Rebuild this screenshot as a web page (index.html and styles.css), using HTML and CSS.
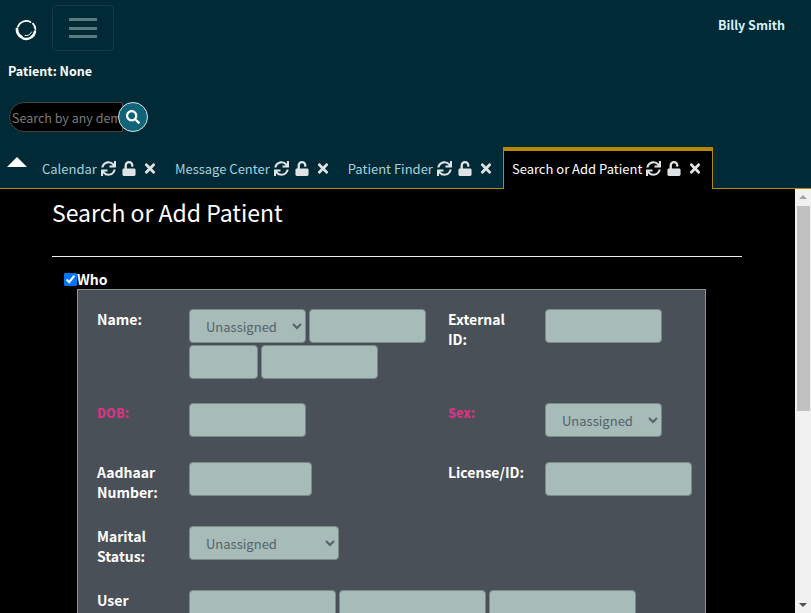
FILE: index.html
```html
<!DOCTYPE html>
<html lang="en">
<head>
  <meta charset="UTF-8" />
  <meta name="viewport" content="width=device-width, initial-scale=1.0"/>
  <title>Search or Add Patient</title>
  <link rel="stylesheet" href="styles.css">
</head>
<body>

<svg class="defs" width="0" height="0">
  <symbol id="i-sync" viewBox="0 0 512 512"><path d="M440.65 12.57l4 82.77A247.16 247.16 0 0 0 255.83 8C134.73 8 33.91 94.92 12.29 209.82A12 12 0 0 0 24.09 224h49.05a12 12 0 0 0 11.67-9.26 175.91 175.91 0 0 1 317-56.94l-101.46-4.86a12 12 0 0 0-12.57 12v47.41a12 12 0 0 0 12 12H500a12 12 0 0 0 12-12V12a12 12 0 0 0-12-12h-47.37a12 12 0 0 0-11.98 12.57zM255.83 432a175.61 175.61 0 0 1-146-77.8l101.8 4.87a12 12 0 0 0 12.57-12v-47.4a12 12 0 0 0-12-12H12a12 12 0 0 0-12 12V500a12 12 0 0 0 12 12h47.35a12 12 0 0 0 12-12.6l-4.15-82.57A247.17 247.17 0 0 0 255.83 504c121.11 0 221.93-86.92 243.55-201.82a12 12 0 0 0-11.8-14.18h-49.05a12 12 0 0 0-11.67 9.26A175.86 175.86 0 0 1 255.83 432z"/></symbol>
  <symbol id="i-unlock" viewBox="0 0 448 512"><path d="M400 256H152V152.9c0-39.6 31.7-72.5 71.3-72.9 40-.4 72.7 32.1 72.7 72v16c0 13.3 10.7 24 24 24h32c13.3 0 24-10.7 24-24v-16C376 68 307.5-.3 223.5 0 139.5.3 72 69.5 72 153.5V256H48c-26.5 0-48 21.5-48 48v160c0 26.5 21.5 48 48 48h352c26.5 0 48-21.5 48-48V304c0-26.5-21.5-48-48-48z"/></symbol>
  <symbol id="i-times" viewBox="0 0 352 512"><path d="M242.72 256l100.07-100.07c12.28-12.28 12.28-32.19 0-44.48l-22.24-22.24c-12.28-12.28-32.19-12.28-44.48 0L176 189.28 75.93 89.21c-12.28-12.28-32.19-12.28-44.48 0L9.21 111.45c-12.28 12.28-12.28 32.19 0 44.48L109.28 256 9.21 356.07c-12.28 12.28-12.28 32.19 0 44.48l22.24 22.24c12.28 12.28 32.2 12.28 44.48 0L176 322.72l100.07 100.07c12.28 12.28 32.2 12.28 44.48 0l22.24-22.24c12.28-12.28 12.28-32.19 0-44.48L242.72 256z"/></symbol>
  <symbol id="i-search" viewBox="0 0 512 512"><path d="M505 442.7L405.3 343c-4.5-4.5-10.6-7-17-7H372c27.6-35.3 44-79.7 44-128C416 93.1 322.9 0 208 0S0 93.1 0 208s93.1 208 208 208c48.3 0 92.7-16.4 128-44v16.3c0 6.4 2.5 12.5 7 17l99.7 99.7c9.4 9.4 24.6 9.4 33.9 0l28.3-28.3c9.4-9.4 9.4-24.6.1-34zM208 336c-70.7 0-128-57.2-128-128 0-70.7 57.2-128 128-128 70.7 0 128 57.2 128 128 0 70.7-57.2 128-128 128z"/></symbol>
</svg>

<header class="topbar">
  <div class="toprow">
    <a class="logo" href="#">
      <svg width="22" height="22" viewBox="0 0 22 22" fill="none" stroke="#fff" stroke-linecap="round">
        <path d="M15.5 3A9 9 0 0 0 3 7.5" stroke-width="1.8"/>
        <path d="M2 10A9 9 0 0 0 6.5 18" stroke-width="2.8"/>
        <path d="M8 19.4A9 9 0 0 0 20 12.5" stroke-width="2.4"/>
        <path d="M10 16.5A6 6 0 0 0 16.5 13" stroke-width="0.9"/>
        <path d="M18 4.6A9 9 0 0 1 20.4 10" stroke-width="1.8"/>
      </svg>
    </a>
    <button class="burger" type="button"><span></span><span></span><span></span></button>
    <span class="username">Billy Smith</span>
  </div>
  <div class="patient">Patient: None</div>
  <form class="search">
    <input class="search-input" type="text" placeholder="Search by any demographics">
    <button class="search-btn" type="button"><svg class="ico"><use href="#i-search"/></svg></button>
  </form>
  <nav class="tabs">
    <span class="collapse"></span>
    <div class="tab">Calendar
      <svg class="ico sync"><use href="#i-sync"/></svg><svg class="ico lock"><use href="#i-unlock"/></svg><svg class="ico close"><use href="#i-times"/></svg>
    </div>
    <div class="tab">Message Center
      <svg class="ico sync"><use href="#i-sync"/></svg><svg class="ico lock"><use href="#i-unlock"/></svg><svg class="ico close"><use href="#i-times"/></svg>
    </div>
    <div class="tab">Patient Finder
      <svg class="ico sync"><use href="#i-sync"/></svg><svg class="ico lock"><use href="#i-unlock"/></svg><svg class="ico close"><use href="#i-times"/></svg>
    </div>
    <div class="tab active">Search or Add Patient
      <svg class="ico sync"><use href="#i-sync"/></svg><svg class="ico lock"><use href="#i-unlock"/></svg><svg class="ico close"><use href="#i-times"/></svg>
    </div>
  </nav>
</header>

<div class="body-wrap">
  <main class="content">
    <h2 class="title">Search or Add Patient</h2>
    <hr class="rule">
    <label class="section"><input type="checkbox" checked>Who</label>
    <div class="panel">
      <div class="row">
        <label class="lbl">Name:</label>
        <div class="fields">
          <select class="w117"><option>Unassigned</option></select>
          <input class="w117" type="text">
          <input class="w69" type="text">
          <input class="w117" type="text">
        </div>
        <label class="lbl second">External ID:</label>
        <div class="fields"><input class="w117" type="text"></div>
      </div>
      <div class="row tall">
        <label class="lbl req">DOB:</label>
        <div class="fields"><input class="w117" type="text"></div>
        <label class="lbl second req">Sex:</label>
        <div class="fields"><select class="w117"><option>Unassigned</option></select></div>
      </div>
      <div class="row">
        <label class="lbl">Aadhaar Number:</label>
        <div class="fields"><input class="w123" type="text"></div>
        <label class="lbl second">License/ID:</label>
        <div class="fields"><input class="w147" type="text"></div>
      </div>
      <div class="row">
        <label class="lbl">Marital Status:</label>
        <div class="fields wide"><select class="w150"><option>Unassigned</option></select></div>
      </div>
      <div class="row">
        <label class="lbl">User</label>
        <div class="fields wide">
          <input class="w147" type="text">
          <input class="w147" type="text">
          <input class="w147" type="text">
        </div>
      </div>
    </div>
  </main>
  <div class="scrollbar">
    <span class="arrow up"></span>
    <span class="thumb"></span>
    <span class="arrow down"></span>
  </div>
</div>

</body>
</html>
```

FILE: styles.css
```css
html, body {
  height: 100%;
}
body {
  margin: 0;
  display: flex;
  flex-direction: column;
  overflow: hidden;
  font-family: "Noto Sans CJK SC", "Noto Sans", sans-serif;
  font-size: 13px;
  background: #000;
  color: #fff;
}
.defs {
  position: absolute;
}
.ico {
  display: block;
  fill: currentColor;
}

/* top bar */
.topbar {
  flex: none;
  height: 189px;
  box-sizing: border-box;
  background: #002b36;
  border-bottom: 1px solid #b58900;
}
.toprow {
  display: flex;
  align-items: center;
  height: 46px;
  padding-top: 5px;
}
.logo {
  display: block;
  width: 22px;
  height: 22px;
  margin: 4px 15px 0 15px;
}
.burger {
  display: flex;
  flex-direction: column;
  justify-content: space-between;
  width: 62px;
  height: 46px;
  box-sizing: border-box;
  padding: 12px 16px;
  background: none;
  border: 1px solid #0f3f4a;
  border-radius: 4px;
}
.burger span {
  display: block;
  height: 3px;
  width: 28px;
  background: #5d7a80;
}
.username {
  margin: 0 26px 7px auto;
  font-size: 12.5px;
  font-weight: 700;
  color: #d6f0f5;
}
.patient {
  margin: 10px 0 0 8px;
  font-size: 12.5px;
  line-height: 19px;
  font-weight: 700;
}
.search {
  display: flex;
  align-items: center;
  margin: 21px 0 0 9px;
  height: 32px;
}
.search-input {
  width: 114px;
  height: 30px;
  box-sizing: border-box;
  padding: 0 0 0 2px;
  background: #000;
  border: 1px solid #444;
  border-radius: 15px 0 0 15px;
  font: inherit;
  font-size: 12.5px;
  color: #fff;
}
.search-input::placeholder {
  color: #7b7b7b;
}
.search-btn {
  display: flex;
  align-items: center;
  justify-content: center;
  width: 30px;
  height: 30px;
  margin-left: -5px;
  padding: 0;
  background: #0f6478;
  border: 1px solid #d8e6e8;
  border-radius: 50%;
  color: #fff;
  position: relative;
}
.search-btn .ico {
  width: 14px;
  height: 14px;
}

/* tabs */
.tabs {
  display: flex;
  align-items: flex-end;
  margin-top: 15px;
  height: 40px;
}
.collapse {
  width: 0;
  height: 0;
  margin: 0 6px 21px 7px;
  border-left: 10px solid transparent;
  border-right: 10px solid transparent;
  border-bottom: 10px solid #fff;
}
.tab {
  display: flex;
  align-items: center;
  height: 40px;
  box-sizing: border-box;
  padding: 0 10px 0 9px;
  color: #a8d0de;
  white-space: nowrap;
}
.tab .ico {
  color: #dfe3e6;
  height: 15px;
}
.tab .sync {
  width: 15px;
  margin-left: 4px;
}
.tab .lock {
  width: 14px;
  margin-left: 6px;
}
.tab .close {
  width: 12px;
  margin-left: 8px;
}
.tab.active {
  height: 42px;
  margin: 0 0 -1px 1px;
  background: #000;
  color: #fff;
  border: 1px solid #b58900;
  border-top-width: 4px;
  border-bottom: none;
  padding: 0 11px 3px 8px;
}

/* main area */
.body-wrap {
  flex: 1;
  min-height: 0;
  display: flex;
}
.content {
  flex: 1;
  min-width: 0;
  overflow: hidden;
  padding: 0 53px 0 52px;
}
.scrollbar {
  flex: none;
  width: 16px;
  display: flex;
  flex-direction: column;
  align-items: center;
  background: #f1f1f1;
}
.arrow {
  width: 0;
  height: 0;
  border-left: 4px solid transparent;
  border-right: 4px solid transparent;
}
.arrow.up {
  margin: 6px 0 7px;
  border-bottom: 4px solid #a3a3a3;
}
.arrow.down {
  margin-top: auto;
  margin-bottom: 6px;
  border-top: 4px solid #505050;
}
.thumb {
  width: 13px;
  height: 205px;
  background: #c1c1c1;
}
.title {
  margin: 9px 0 0;
  font-size: 23px;
  line-height: 29px;
  font-weight: 400;
}
.rule {
  margin: 29px 0 0;
  border: none;
  border-top: 1px solid #eee;
}
.section {
  display: flex;
  align-items: center;
  margin: 13px 0 0 12px;
  height: 18px;
  font-size: 14px;
  font-weight: 700;
}
.section input {
  width: 13px;
  height: 13px;
  margin: 0;
}
.panel {
  margin: 1px 36px 30px 25px;
  padding: 19px 14px 30px 19px;
  background: #4a5058;
  border: 1px solid #8a9696;
}
.row {
  display: flex;
  align-items: flex-start;
  margin-bottom: 24px;
}
.row.tall {
  min-height: 35px;
}
.lbl {
  flex: none;
  width: 92px;
  font-size: 14px;
  line-height: 20px;
  font-weight: 700;
  box-sizing: border-box;
  padding-right: 20px;
}
.lbl.second {
  width: 97px;
  padding-right: 30px;
}
.lbl.req {
  color: #d33682;
  font-size: 12.5px;
  font-weight: 900;
}
.fields {
  flex: none;
  width: 259px;
  display: flex;
  flex-wrap: wrap;
  gap: 2px 3px;
}
.fields:last-child {
  width: 150px;
}
.fields.wide {
  width: 460px;
}
.fields input, .fields select {
  height: 34px;
  box-sizing: border-box;
  background-color: #a7bbb8;
  border: 1px solid #7c8a8a;
  border-radius: 4px;
  font: inherit;
  font-size: 13px;
  color: #55626b;
  padding: 0 0 0 12px;
}
.w69 { width: 69px; }
.w117 { width: 117px; }
.w123 { width: 123px; }
.w147 { width: 147px; }
.w150 { width: 150px; }
```
